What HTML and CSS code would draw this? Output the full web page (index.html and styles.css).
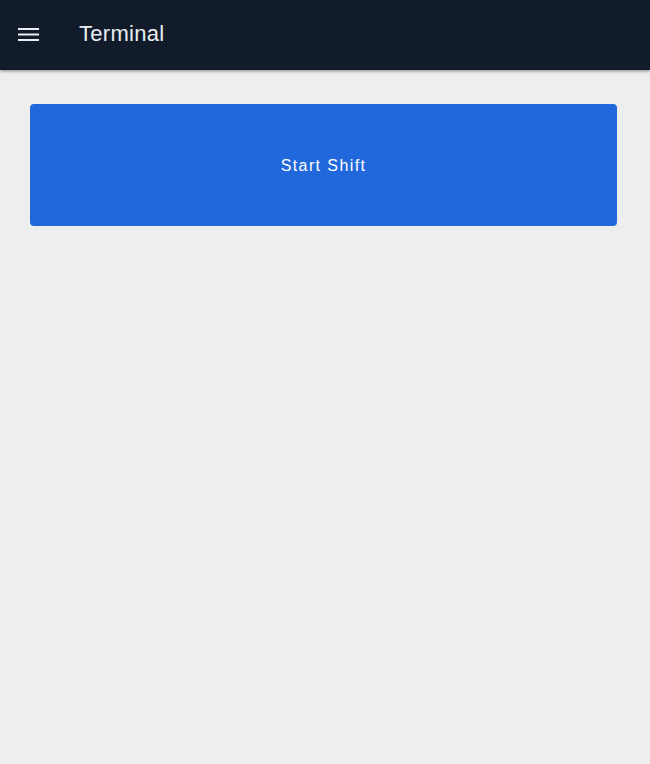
FILE: index.html
```html
<!DOCTYPE html>
<html>
<head>
<meta charset="utf-8">
<link rel="stylesheet" href="styles.css">
</head>
<body>
<header class="topbar">
  <button class="menu-btn" aria-label="menu">
    <svg width="22" height="16" viewBox="0 0 22 16"><rect x="0" y="1" width="21" height="2" fill="#e9eef4"/><rect x="0" y="6.5" width="21" height="2" fill="#e9eef4"/><rect x="0" y="12" width="21" height="2" fill="#e9eef4"/></svg>
  </button>
  <h1 class="title">Terminal</h1>
</header>
<main class="content">
  <button class="start-btn">Start Shift</button>
</main>
</body>
</html>
```
FILE: styles.css
```css
html, body {
  margin: 0;
  padding: 0;
  background: #eeeeee;
  font-family: "Liberation Sans", Arial, sans-serif;
  height: 100%;
}
.topbar {
  height: 70px;
  background: #111b2a;
  display: flex;
  align-items: center;
  box-shadow: 0 1px 3px rgba(0,0,0,0.45);
  position: relative;
}
.menu-btn {
  background: none;
  border: none;
  padding: 0;
  margin-left: 18px;
  width: 22px;
  height: 16px;
  display: flex;
}
.title {
  margin: 0 0 2px 39px;
  font-size: 22px;
  font-weight: normal;
  color: #e9eef4;
  letter-spacing: 0.3px;
}
.content {
  padding: 34px 33px 0 30px;
}
.start-btn {
  display: block;
  width: 100%;
  height: 122px;
  padding-top: 2px;
  background: #2168dc;
  border: none;
  border-radius: 4px;
  color: #ffffff;
  font-family: "Liberation Sans", Arial, sans-serif;
  font-size: 16px;
  letter-spacing: 1.4px;
}
```
